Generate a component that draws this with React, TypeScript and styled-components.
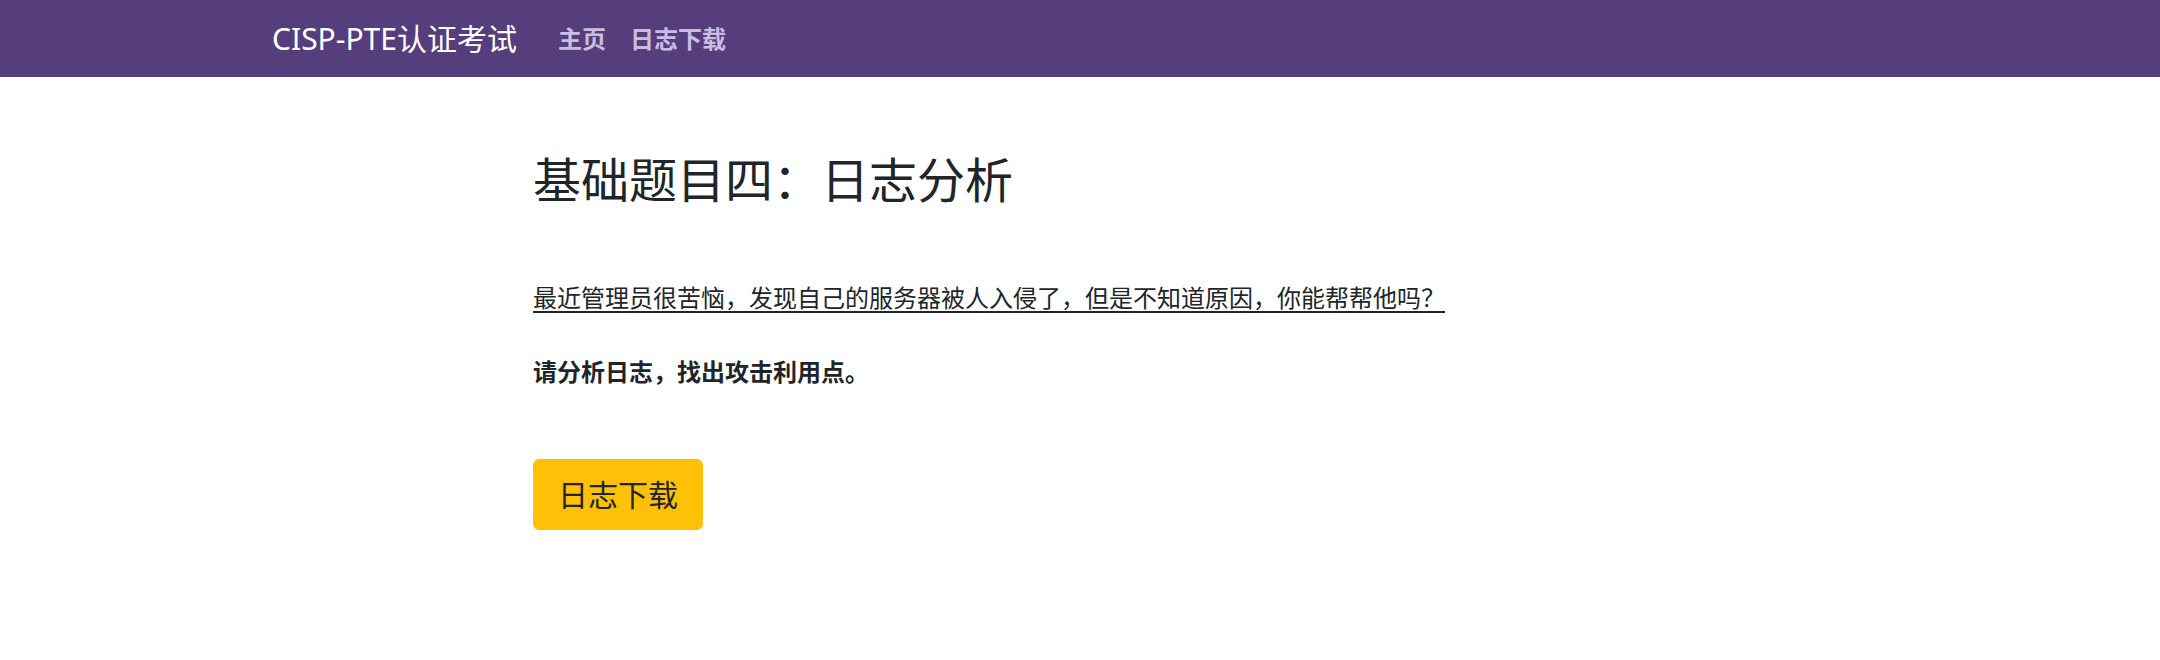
import styled, { createGlobalStyle } from 'styled-components';

const GlobalStyle = createGlobalStyle`
  body {
    margin: 0;
    background: #fff;
    color: #212529;
    font-family: "Noto Sans", "Noto Sans CJK SC", sans-serif;
  }
`;

const App = () => {
  return (
    <>
      <GlobalStyle />
      <Navbar>
        <NavContainer>
          <Brand href="#">CISP-PTE认证考试</Brand>
          <NavLinks>
            <NavLink href="#">主页</NavLink>
            <NavLink href="#">日志下载</NavLink>
          </NavLinks>
        </NavContainer>
      </Navbar>
      <Main>
        <Title>基础题目四：日志分析</Title>
        <Story>最近管理员很苦恼，发现自己的服务器被人入侵了，但是不知道原因，你能帮帮他吗？</Story>
        <Task>请分析日志，找出攻击利用点。</Task>
        <DownloadButton href="#">日志下载</DownloadButton>
      </Main>
    </>
  );
};

export default App;

const Navbar = styled.nav`
  height: 77px;
  background-color: #563d7c;
  display: flex;
  align-items: center;
`;
const NavContainer = styled.div`
  width: 1616px;
  margin: 0 auto;
  display: flex;
  align-items: center;
`;
const Brand = styled.a`
  color: #fff;
  font-size: 30px;
  line-height: 45px;
  text-decoration: none;
  margin-right: 29px;
`;
const NavLinks = styled.div`
  display: flex;
`;
const NavLink = styled.a`
  color: #cbbde2;
  font-size: 24px;
  font-weight: 700;
  line-height: 36px;
  padding: 0 12px;
  text-decoration: none;
`;
const Main = styled.main`
  width: 1094px;
  margin: 0 auto;
  padding-top: 74px;
`;
const Title = styled.h1`
  font-size: 48px;
  font-weight: 400;
  line-height: 57.6px;
  margin: 0 0 71px;
`;
const Story = styled.p`
  display: inline-block;
  font-size: 24px;
  line-height: 36px;
  margin: 0 0 38px;
  text-decoration: underline;
  text-decoration-thickness: 2px;
  text-underline-offset: 4px;
`;
const Task = styled.p`
  font-size: 24px;
  font-weight: 700;
  line-height: 36px;
  margin: 0 0 69px;
`;
const DownloadButton = styled.a`
  display: inline-block;
  background-color: #ffc107;
  border: 1px solid #ffc107;
  border-radius: 6px;
  color: #212529;
  font-size: 30px;
  line-height: 45px;
  padding: 12px 24px;
  text-decoration: none;
`;
